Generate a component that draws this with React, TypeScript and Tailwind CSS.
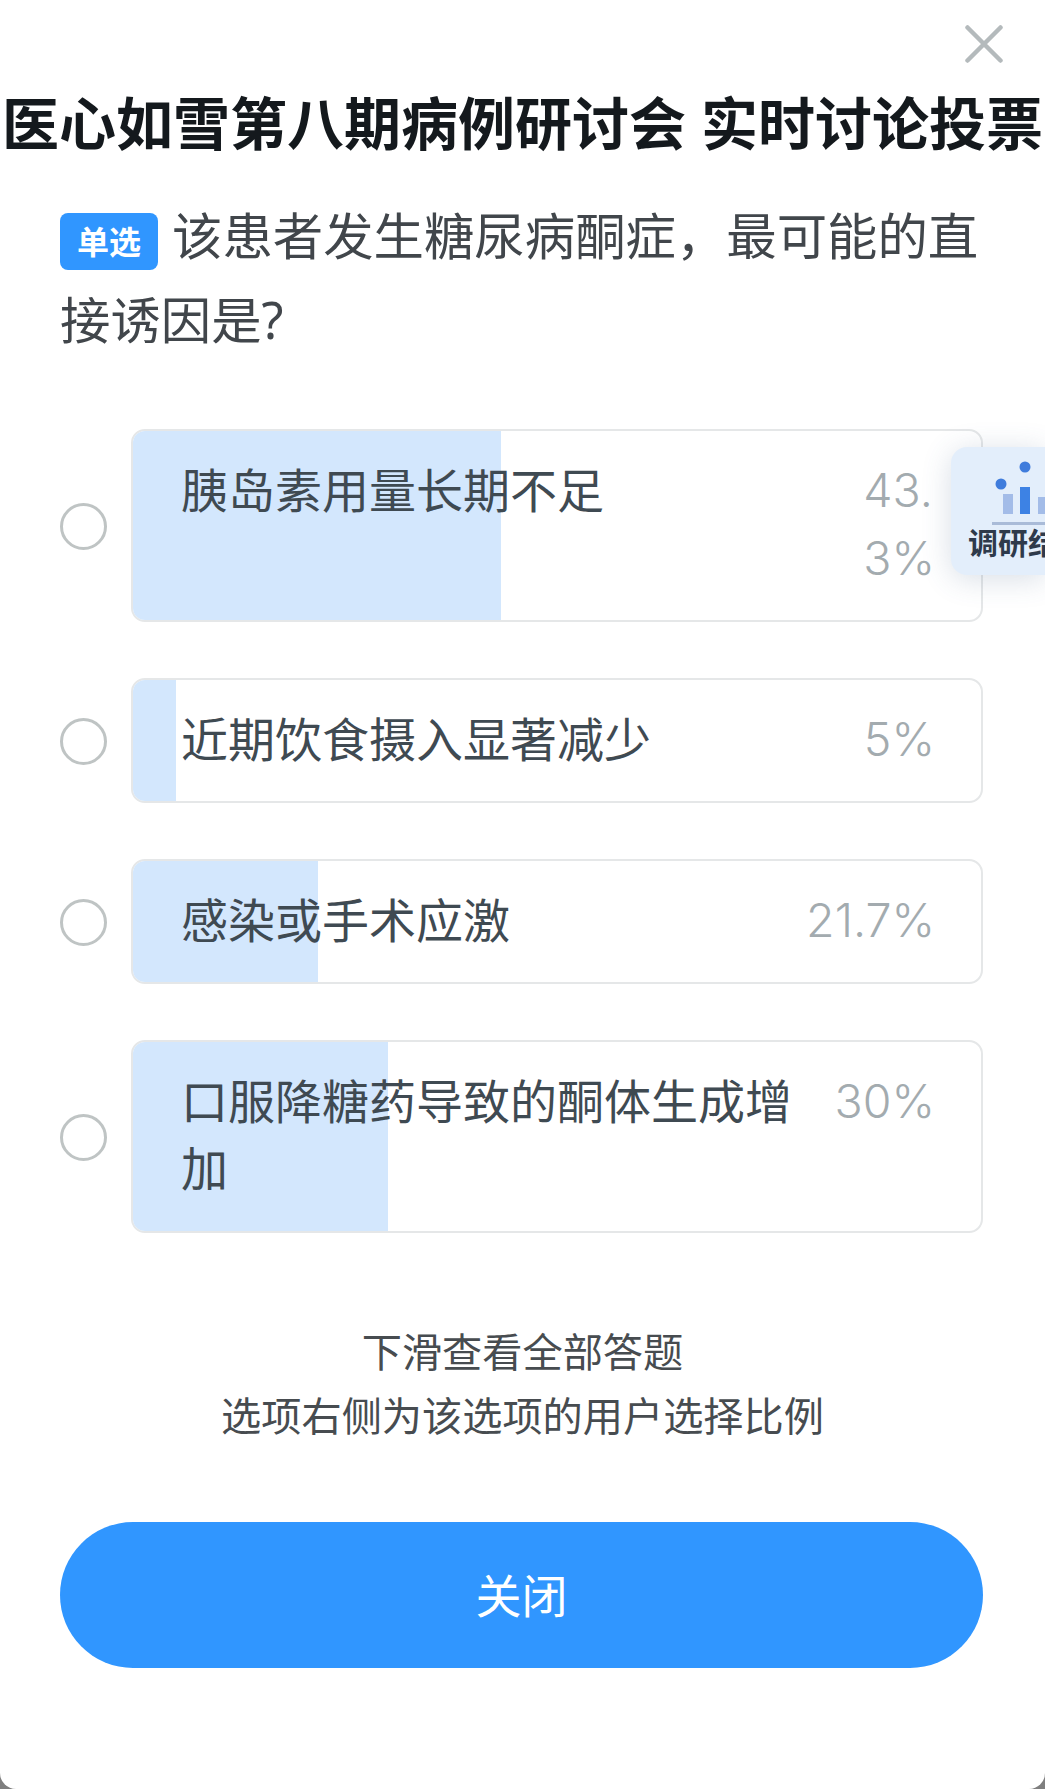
const OPTIONS = [
  { label: "胰岛素用量长期不足", pct: ["43.", "3%"], width: 43.3 },
  { label: "近期饮食摄入显著减少", pct: ["5%"], width: 5 },
  { label: "感染或手术应激", pct: ["21.7%"], width: 21.7 },
  { label: "口服降糖药导致的酮体生成增加", pct: ["30%"], width: 30 },
];

const FONT = "font-['Noto_Sans','Noto_Sans_CJK_SC',sans-serif]";

function SurveyBadge() {
  return (
    <div className="absolute right-0 top-[447px] h-[128px] w-[94px] overflow-hidden rounded-l-[16px] bg-[#e3eefb] shadow-[0_4px_30px_rgba(60,90,130,0.2)]">
      <svg className="ml-[28px] mt-[14px] block" width="66" height="65" viewBox="0 0 66 65">
        <circle cx="22" cy="23" r="5.5" fill="#3f7cdc" />
        <circle cx="46" cy="6" r="5.5" fill="#3f7cdc" />
        <rect x="24" y="33" width="10" height="20" fill="#a3bce8" />
        <rect x="41" y="26" width="10" height="27" fill="#3d82e4" />
        <rect x="59" y="36" width="10" height="17" fill="#a3bce8" />
        <rect x="13" y="61" width="53" height="3" fill="#a9bbd8" />
      </svg>
      <div className="ml-[17px] w-[120px] whitespace-nowrap text-[30px] leading-[34px] font-bold text-[#2e3a4b]">调研结果</div>
    </div>
  );
}

export default function App() {
  return (
    <div className={`${FONT} h-[1789px] w-[1045px] overflow-hidden bg-[#7f7f7f]`}>
      <div className="relative flex h-full flex-col overflow-hidden rounded-b-[16px] bg-white">
        <div className="flex h-[98px] shrink-0 justify-end pr-[42px] pt-[25px]">
          <svg width="38" height="38" viewBox="0 0 38 38" fill="none" stroke="#b4babc" strokeWidth="4.5" strokeLinecap="round">
            <path d="M2.5 2.5 L35.5 35.5 M35.5 2.5 L2.5 35.5" />
          </svg>
        </div>

        <h1 className="h-[50px] shrink-0 text-center text-[57px] leading-[50px] font-bold whitespace-nowrap text-[#14191d]">
          医心如雪第八期病例研讨会 实时讨论投票
        </h1>

        <div className="mt-[46px] shrink-0 pl-[60px] pr-[60px] text-[50.4px] leading-[84px] text-[#41464b]">
          <span className="mr-[14px] inline-flex h-[57px] w-[98px] items-center justify-center rounded-[8px] bg-[#3096ff] align-middle text-[32px] leading-none font-bold text-white">
            单选
          </span>
          该患者发生糖尿病酮症，最可能的直接诱因是?
        </div>

        <div className="mt-[67px] flex shrink-0 flex-col gap-[55.5px] pl-[60px] pr-[62px]">
          {OPTIONS.map((o) => (
            <div key={o.label} className="flex items-center">
              <div className="h-[47px] w-[47px] shrink-0 translate-y-[1px] rounded-full border-[3px] border-[#bfc4c4] bg-white" />
              <div className="relative ml-[24px] flex-1 overflow-hidden rounded-[14px] border-[2px] border-[#e5e7e8] bg-white">
                <div className="absolute inset-y-0 left-0 bg-[#d3e7fd]" style={{ width: `calc(${o.width}% + 1px)` }} />
                <div className="relative flex items-start justify-between pb-[28px] pl-[48px] pr-[46px] pt-[26px] text-[47px] leading-[67.5px]">
                  <span className="w-[625px] text-[#3f4a52]">{o.label}</span>
                  <span className="font-['Inter',sans-serif] text-[46.5px] font-light whitespace-nowrap text-[#a3abaf]">
                    {o.pct.map((line) => (
                      <span key={line} className="block">{line}</span>
                    ))}
                  </span>
                </div>
              </div>
            </div>
          ))}
        </div>

        <div className="mt-[87.5px] shrink-0 text-center text-[40.2px] leading-[64px] text-[#474c50]">
          <div>下滑查看全部答题</div>
          <div>选项右侧为该选项的用户选择比例</div>
        </div>

        <div className="mt-[74px] shrink-0 pl-[60px] pr-[62px]">
          <button className="flex h-[146px] w-full items-center justify-center rounded-full bg-[#3096ff] text-[46px] text-white">
            关闭
          </button>
        </div>

        <SurveyBadge />
      </div>
    </div>
  );
}
